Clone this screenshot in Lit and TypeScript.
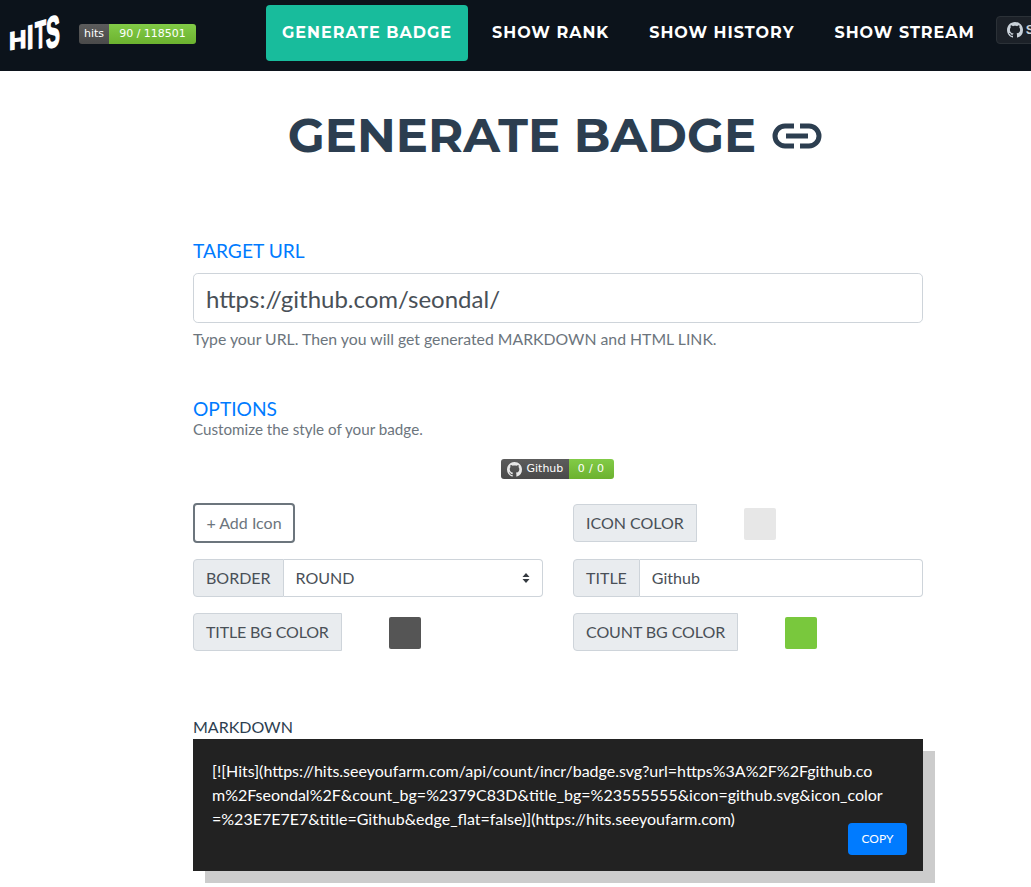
import { LitElement, html, css, svg } from "lit";
import { customElement } from "lit/decorators.js";

const GH = svg`<path fill-rule="evenodd" d="M8 0C3.58 0 0 3.58 0 8c0 3.54 2.29 6.53 5.47 7.59.4.07.55-.17.55-.38 0-.19-.01-.82-.01-1.49-2.01.37-2.53-.49-2.69-.94-.09-.23-.48-.94-.82-1.13-.28-.15-.68-.52-.01-.53.63-.01 1.08.58 1.23.82.72 1.21 1.87.87 2.33.66.07-.52.28-.87.51-1.07-1.78-.2-3.64-.89-3.64-3.95 0-.87.31-1.59.82-2.15-.08-.2-.36-1.02.08-2.12 0 0 .67-.21 2.2.82.64-.18 1.32-.27 2-.27.68 0 1.36.09 2 .27 1.53-1.04 2.2-.82 2.2-.82.44 1.1.16 1.92.08 2.12.51.56.82 1.27.82 2.15 0 3.07-1.87 3.75-3.65 3.95.29.25.54.73.54 1.48 0 1.07-.01 1.93-.01 2.2 0 .21.15.46.55.38A8.013 8.013 0 0016 8c0-4.42-3.58-8-8-8z"/>`;

@customElement("app-root")
export class AppRoot extends LitElement {
  static styles = css`
    :host { display: block; font-family: Lato, "Liberation Sans", sans-serif; color: #495057; background: #fff; overflow: hidden; font-size: 16px; line-height: 24px; }
    * { box-sizing: border-box; }
    nav { height: 71px; background: #0c131b; display: flex; align-items: flex-start; white-space: nowrap; overflow: hidden; }
    .logo { width: 51px; height: 36px; margin: 15px 0 0 9px; flex: none; display: flex; align-items: flex-end; color: #fff; font: 700 23px/17px "Liberation Sans", sans-serif; }
    .logo span { display: block; transform-origin: left bottom; -webkit-text-stroke: 1px #fff; }
    .logo .h { width: 18px; transform: scale(1.05, 1.1) skewY(-8deg); }
    .logo .i { width: 8px; transform: scaleY(1.45) skewY(-10deg); }
    .logo .t { width: 11px; transform: scale(0.78, 1.65) skewY(-8deg); }
    .logo .s { width: 14px; transform: scale(0.9, 1.9) skewY(-8deg); }
    .badge { display: inline-flex; height: 20px; border-radius: 3px; overflow: hidden; font: 11px/20px "DejaVu Sans", sans-serif; color: #fff; flex: none; }
    .badge .l { background: linear-gradient(#5c5c5c, #4a4a4a); display: flex; align-items: center; }
    .badge .r { background: linear-gradient(#82cb47, #6cb22f); text-align: center; }
    .top-badge { margin: 24px 70px 0 19px; }
    .top-badge .l { width: 30px; justify-content: center; }
    .top-badge .r { width: 87px; }
    .links { display: flex; align-items: flex-start; gap: 8px; }
    .link { font: 700 16px/24px Montserrat, Inter, sans-serif; letter-spacing: 1px; color: #fff; text-transform: uppercase; padding: 15.5px 16px; margin-top: 5px; height: 56px; border-radius: 4px; }
    .link.active { background: #18bc9c; width: 202px; text-align: center; padding: 15.5px 0; }
    .star { margin: 16px 0 0 5px; height: 28px; width: 80px; flex: none; border: 1px solid #2b3137; border-radius: 4px; background: #1c2128; color: #c9d1d9; display: flex; align-items: center; padding-left: 10px; gap: 3px; font: 700 13px/26px "Liberation Sans", sans-serif; }
    .star svg { width: 16px; height: 16px; fill: #c9d1d9; flex: none; }

    h1 { margin: 39px 0 0; height: 50px; display: flex; justify-content: center; align-items: center; gap: 16px; font: 700 48px/50px Montserrat, Inter, sans-serif; color: #2c3e50; text-transform: uppercase; padding-left: 79px; }
    h1 svg { width: 50px; height: 26px; flex: none; margin-top: 1px; }
    main { width: 730px; margin: 0 0 0 193px; padding: 79px 0 40px; }
    .head { color: #007bff; font-size: 19.2px; line-height: 24px; }
    .url { display: block; width: 100%; height: 50px; margin-top: 10px; border: 1px solid #ced4da; border-radius: 4.8px; padding: 0 12px; font: 24px/30px Lato, sans-serif; color: #495057; background: #fff; outline: none; }
    .hint { color: #6c757d; font-size: 15.8px; line-height: 24px; }
    .hint.first { margin-top: 4px; }
    .opts { margin-top: 46px; }
    .opts .hint { margin-top: -1px; line-height: 19px; font-size: 15.2px; }
    .badge-row { display: flex; justify-content: center; margin-top: 20px; height: 20px; padding-right: 2px; }
    .demo .l { width: 68px; padding-left: 6px; gap: 5px; }
    .demo .l svg { width: 15px; height: 15px; fill: #e7e7e7; flex: none; }
    .demo .r { width: 45px; letter-spacing: 0.4px; }
    .grid { display: grid; grid-template-columns: 350px 350px; column-gap: 30px; row-gap: 16px; margin-top: 24px; }
    .addbtn { width: 102px; height: 40px; border: 2px solid #6c757d; border-radius: 4px; background: #fff; color: #6c757d; font: 16px/24px Lato, sans-serif; padding: 0; }
    .group { display: flex; height: 38px; }
    .group.r1 { margin-top: 1px; }
    .tag { background: #e9ecef; border: 1px solid #ced4da; padding: 0 12px; line-height: 36px; color: #495057; border-radius: 4px 0 0 4px; flex: none; }
    .tag.tight { letter-spacing: -0.15px; }
    .tag.count { letter-spacing: -0.08px; }
    .swatch { width: 32px; height: 32px; border-radius: 2px; margin: 4px 0 0 47px; flex: none; }
    .field { flex: 1; min-width: 0; border: 1px solid #ced4da; border-left: 0; border-radius: 0 4px 4px 0; padding: 0 12px; display: flex; align-items: center; justify-content: space-between; background: #fff; font: 16px/24px Lato, sans-serif; color: #495057; outline: none; }
    .field svg { width: 8px; height: 10px; fill: #343a40; }
    .md-label { margin-top: 64px; color: #2c3e50; line-height: 24px; height: 24px; }
    .code { position: relative; height: 132px; background: #222; box-shadow: 12px 12px 0 #ccc; color: #fff; padding: 20px 40px 0 19px; font-size: 16px; line-height: 24px; word-break: break-all; }
    .copy { position: absolute; right: 16px; bottom: 16px; width: 59px; height: 32px; background: #007bff; border: 0; border-radius: 4px; color: #fff; font: 12px/32px Lato, sans-serif; padding: 0; }
  `;

  render() {
    return html`
      <nav>
        <div class="logo"><span class="h">H</span><span class="i">I</span><span class="t">T</span><span class="s">S</span></div>
        <div class="badge top-badge"><span class="l">hits</span><span class="r">90 / 118501</span></div>
        <div class="links">
          <div class="link active">Generate Badge</div>
          <div class="link">Show Rank</div>
          <div class="link">Show History</div>
          <div class="link">Show Stream</div>
        </div>
        <div class="star"><svg viewBox="0 0 16 16">${GH}</svg>Star</div>
      </nav>
      <h1>Generate Badge
        <svg viewBox="0 0 50 26" fill="none" stroke="#2c3e50" stroke-width="5">
          <path d="M22 3H13a10 10 0 0 0 0 20H22"/>
          <path d="M28 3H37a10 10 0 0 1 0 20H28"/>
          <path d="M14 13H36"/>
        </svg>
      </h1>
      <main>
        <div class="head">TARGET URL</div>
        <input class="url" .value=${"https://github.com/seondal/"} />
        <div class="hint first">Type your URL. Then you will get generated MARKDOWN and HTML LINK.</div>
        <div class="opts">
          <div class="head">OPTIONS</div>
          <div class="hint">Customize the style of your badge.</div>
        </div>
        <div class="badge-row">
          <div class="badge demo"><span class="l"><svg viewBox="0 0 16 16">${GH}</svg>Github</span><span class="r">0 / 0</span></div>
        </div>
        <div class="grid">
          <button class="addbtn">+ Add Icon</button>
          <div class="group r1"><span class="tag">ICON COLOR</span><span class="swatch" style="background:#e7e7e7"></span></div>
          <div class="group"><span class="tag">BORDER</span>
            <div class="field">ROUND<svg viewBox="0 0 8 10"><path d="M4 0l3.5 4h-7zM4 10L.5 6h7z"/></svg></div>
          </div>
          <div class="group"><span class="tag">TITLE</span><input class="field" .value=${"Github"} /></div>
          <div class="group"><span class="tag tight">TITLE BG COLOR</span><span class="swatch" style="background:#555555"></span></div>
          <div class="group"><span class="tag count">COUNT BG COLOR</span><span class="swatch" style="background:#79c83d"></span></div>
        </div>
        <div class="md-label">MARKDOWN</div>
        <div class="code">[![Hits](https://hits.seeyoufarm.com/api/count/incr/badge.svg?url=https%3A%2F%2Fgithub.com%2Fseondal%2F&count_bg=%2379C83D&title_bg=%23555555&icon=github.svg&icon_color=%23E7E7E7&title=Github&edge_flat=false)](https://hits.seeyoufarm.com)
          <button class="copy">COPY</button>
        </div>
      </main>
    `;
  }
}
